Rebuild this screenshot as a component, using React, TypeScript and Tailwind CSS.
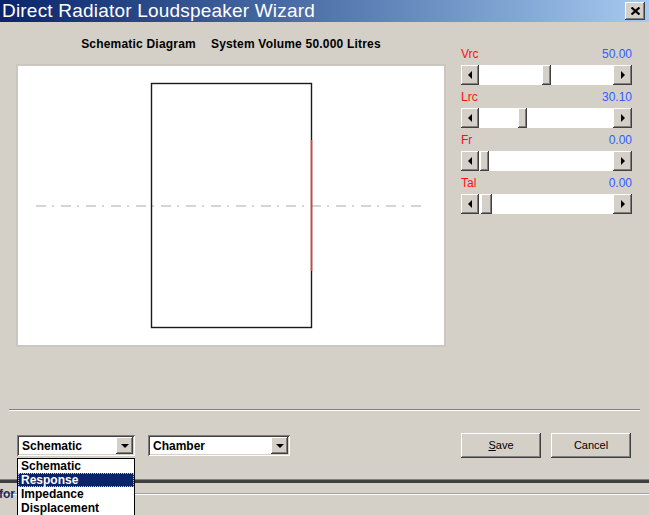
import React from "react";

const raised =
  "shadow-[inset_-1px_-1px_#404040,inset_1px_1px_#ffffff,inset_-2px_-2px_#808080,inset_2px_2px_#d4d0c8]";
const sunken =
  "shadow-[inset_1px_1px_#808080,inset_-1px_-1px_#ffffff,inset_2px_2px_#404040,inset_-2px_-2px_#d4d0c8]";

function Slider({ label, value, thumb, thumbW = 9 }: { label: string; value: string; thumb: number; thumbW?: number }) {
  return (
    <div className="flex flex-col">
      <div className="flex h-[14px] items-center justify-between text-[12px] leading-[14px]">
        <span className="text-[#ff1010]">{label}</span>
        <span className="text-[#2f5cff]">{value}</span>
      </div>
      <div className="mt-[4px] flex h-[20px] w-[171px]">
        <div className={`flex h-full w-[18px] items-center justify-center bg-[#d4d0c8] ${raised}`}>
          <div className="h-0 w-0 border-y-[4px] border-r-[4px] border-y-transparent border-r-black" />
        </div>
        <div className="relative flex-1 bg-white">
          <div className={`absolute top-0 h-full bg-[#d4d0c8] ${raised}`} style={{ left: thumb, width: thumbW }} />
        </div>
        <div className={`flex h-full w-[19px] items-center justify-center bg-[#d4d0c8] ${raised}`}>
          <div className="h-0 w-0 border-y-[4px] border-l-[4px] border-y-transparent border-l-black" />
        </div>
      </div>
    </div>
  );
}

function Combo({ text, w }: { text: string; w: string }) {
  return (
    <div className={`flex h-[21px] ${w} bg-white p-[2px] ${sunken}`}>
      <div className="flex-1 pl-[3px] pt-[1px] text-[12px] font-bold leading-[16px] text-black">{text}</div>
      <div className={`flex h-[17px] w-[17px] items-center justify-center bg-[#d4d0c8] ${raised}`}>
        <div className="h-0 w-0 border-x-[4px] border-t-[4px] border-x-transparent border-t-black" />
      </div>
    </div>
  );
}

function Btn({ children }: { children: React.ReactNode }) {
  return (
    <div className={`flex h-[25px] w-[80px] items-center justify-center bg-[#d4d0c8] text-[11px] text-black ${raised}`}>
      {children}
    </div>
  );
}

export default function App() {
  return (
    <div className="relative h-[515px] w-[649px] overflow-hidden bg-[#d4d0c8] font-['Liberation_Sans',Arial,sans-serif]">
      {/* dialog */}
      <div className="flex h-[479px] flex-col">
        {/* title bar */}
        <div className="flex h-[22px] items-center justify-between bg-gradient-to-r from-[#0a246a] to-[#a6caf0] pl-[2px] pr-[4px]">
          <span className="text-[19px] leading-[22px] tracking-[0.2px] text-white">Direct Radiator Loudspeaker Wizard</span>
          <div className={`flex h-[18px] w-[20px] items-center justify-center bg-[#d4d0c8] ${raised}`}>
            <svg width="9" height="8" viewBox="0 0 9 8">
              <path d="M0.5 0.5 L8.5 7.5 M8.5 0.5 L0.5 7.5" stroke="black" strokeWidth="2.2" />
            </svg>
          </div>
        </div>

        {/* main row */}
        <div className="flex h-[323px] items-start">
          <div className="ml-[16px] flex w-[430px] flex-col items-center">
            <div className="mt-[14px] flex h-[16px] items-center text-[12px] font-bold tracking-[0.2px] text-black">
              <span>Schematic Diagram</span>
              <span className="ml-[15px]">System Volume 50.000 Litres</span>
            </div>
            <div className="mt-[12px] h-[283px] w-[430px] border-2 border-[#cac7c1] bg-white">
              <svg width="426" height="279" viewBox="0 0 426 279">
                <line x1="18" y1="140" x2="408" y2="140" stroke="#d8d4cf" strokeWidth="2" strokeDasharray="10 6 2 7" />
                <rect x="133.5" y="17.5" width="160" height="244" fill="none" stroke="#1a1a1a" strokeWidth="1.4" />
                <line x1="293.5" y1="74" x2="293.5" y2="205" stroke="#ff3030" strokeWidth="1.5" />
              </svg>
            </div>
          </div>
          <div className="ml-[15px] mt-[25px] flex w-[171px] flex-col gap-[5px]">
            <Slider label="Vrc" value="50.00" thumb={63} />
            <Slider label="Lrc" value="30.10" thumb={39} />
            <Slider label="Fr" value="0.00" thumb={1} />
            <Slider label="Tal" value="0.00" thumb={2} thumbW={11} />
          </div>
        </div>

        {/* separator */}
        <div className="mx-[9px] mt-[64px] h-[2px] border-t border-b border-t-[#808080] border-b-white" />

        {/* bottom row */}
        <div className="mt-[22px] flex items-start pl-[17px] pr-[18px]">
          <div className="mt-[2px]">
            <Combo text="Schematic" w="w-[118px]" />
          </div>
          <div className="ml-[13px] mt-[2px]">
            <Combo text="Chamber" w="w-[142px]" />
          </div>
          <div className="ml-auto flex gap-[10px]">
            <Btn>
              <span>
                <span className="underline">S</span>ave
              </span>
            </Btn>
            <Btn>Cancel</Btn>
          </div>
        </div>
      </div>

      {/* dialog bottom frame */}
      <div className="h-[4px] border-t border-t-[#808080] bg-[#404040]" />

      {/* parent window behind */}
      <div className="relative h-[32px] pt-[10px]">
        <div className="h-[2px] border-t border-b border-t-[#a0a0a0] border-b-white" />
        <div className="absolute left-[-1px] top-[5px] text-[12px] font-bold leading-[12px] text-[#1a2a5e]">for</div>
      </div>

      {/* open dropdown list */}
      <div className="absolute left-[17px] top-[458px] w-[118px] border border-black bg-white text-[12px] font-bold leading-[14px] text-black">
        <div className="h-[14px] pl-[3px]">Schematic</div>
        <div className="h-[14px] border border-dotted border-[#c0c0ff] bg-[#0a246a] pl-[2px] leading-[12px] text-white">Response</div>
        <div className="h-[14px] pl-[3px]">Impedance</div>
        <div className="h-[14px] pl-[3px]">Displacement</div>
      </div>
    </div>
  );
}
